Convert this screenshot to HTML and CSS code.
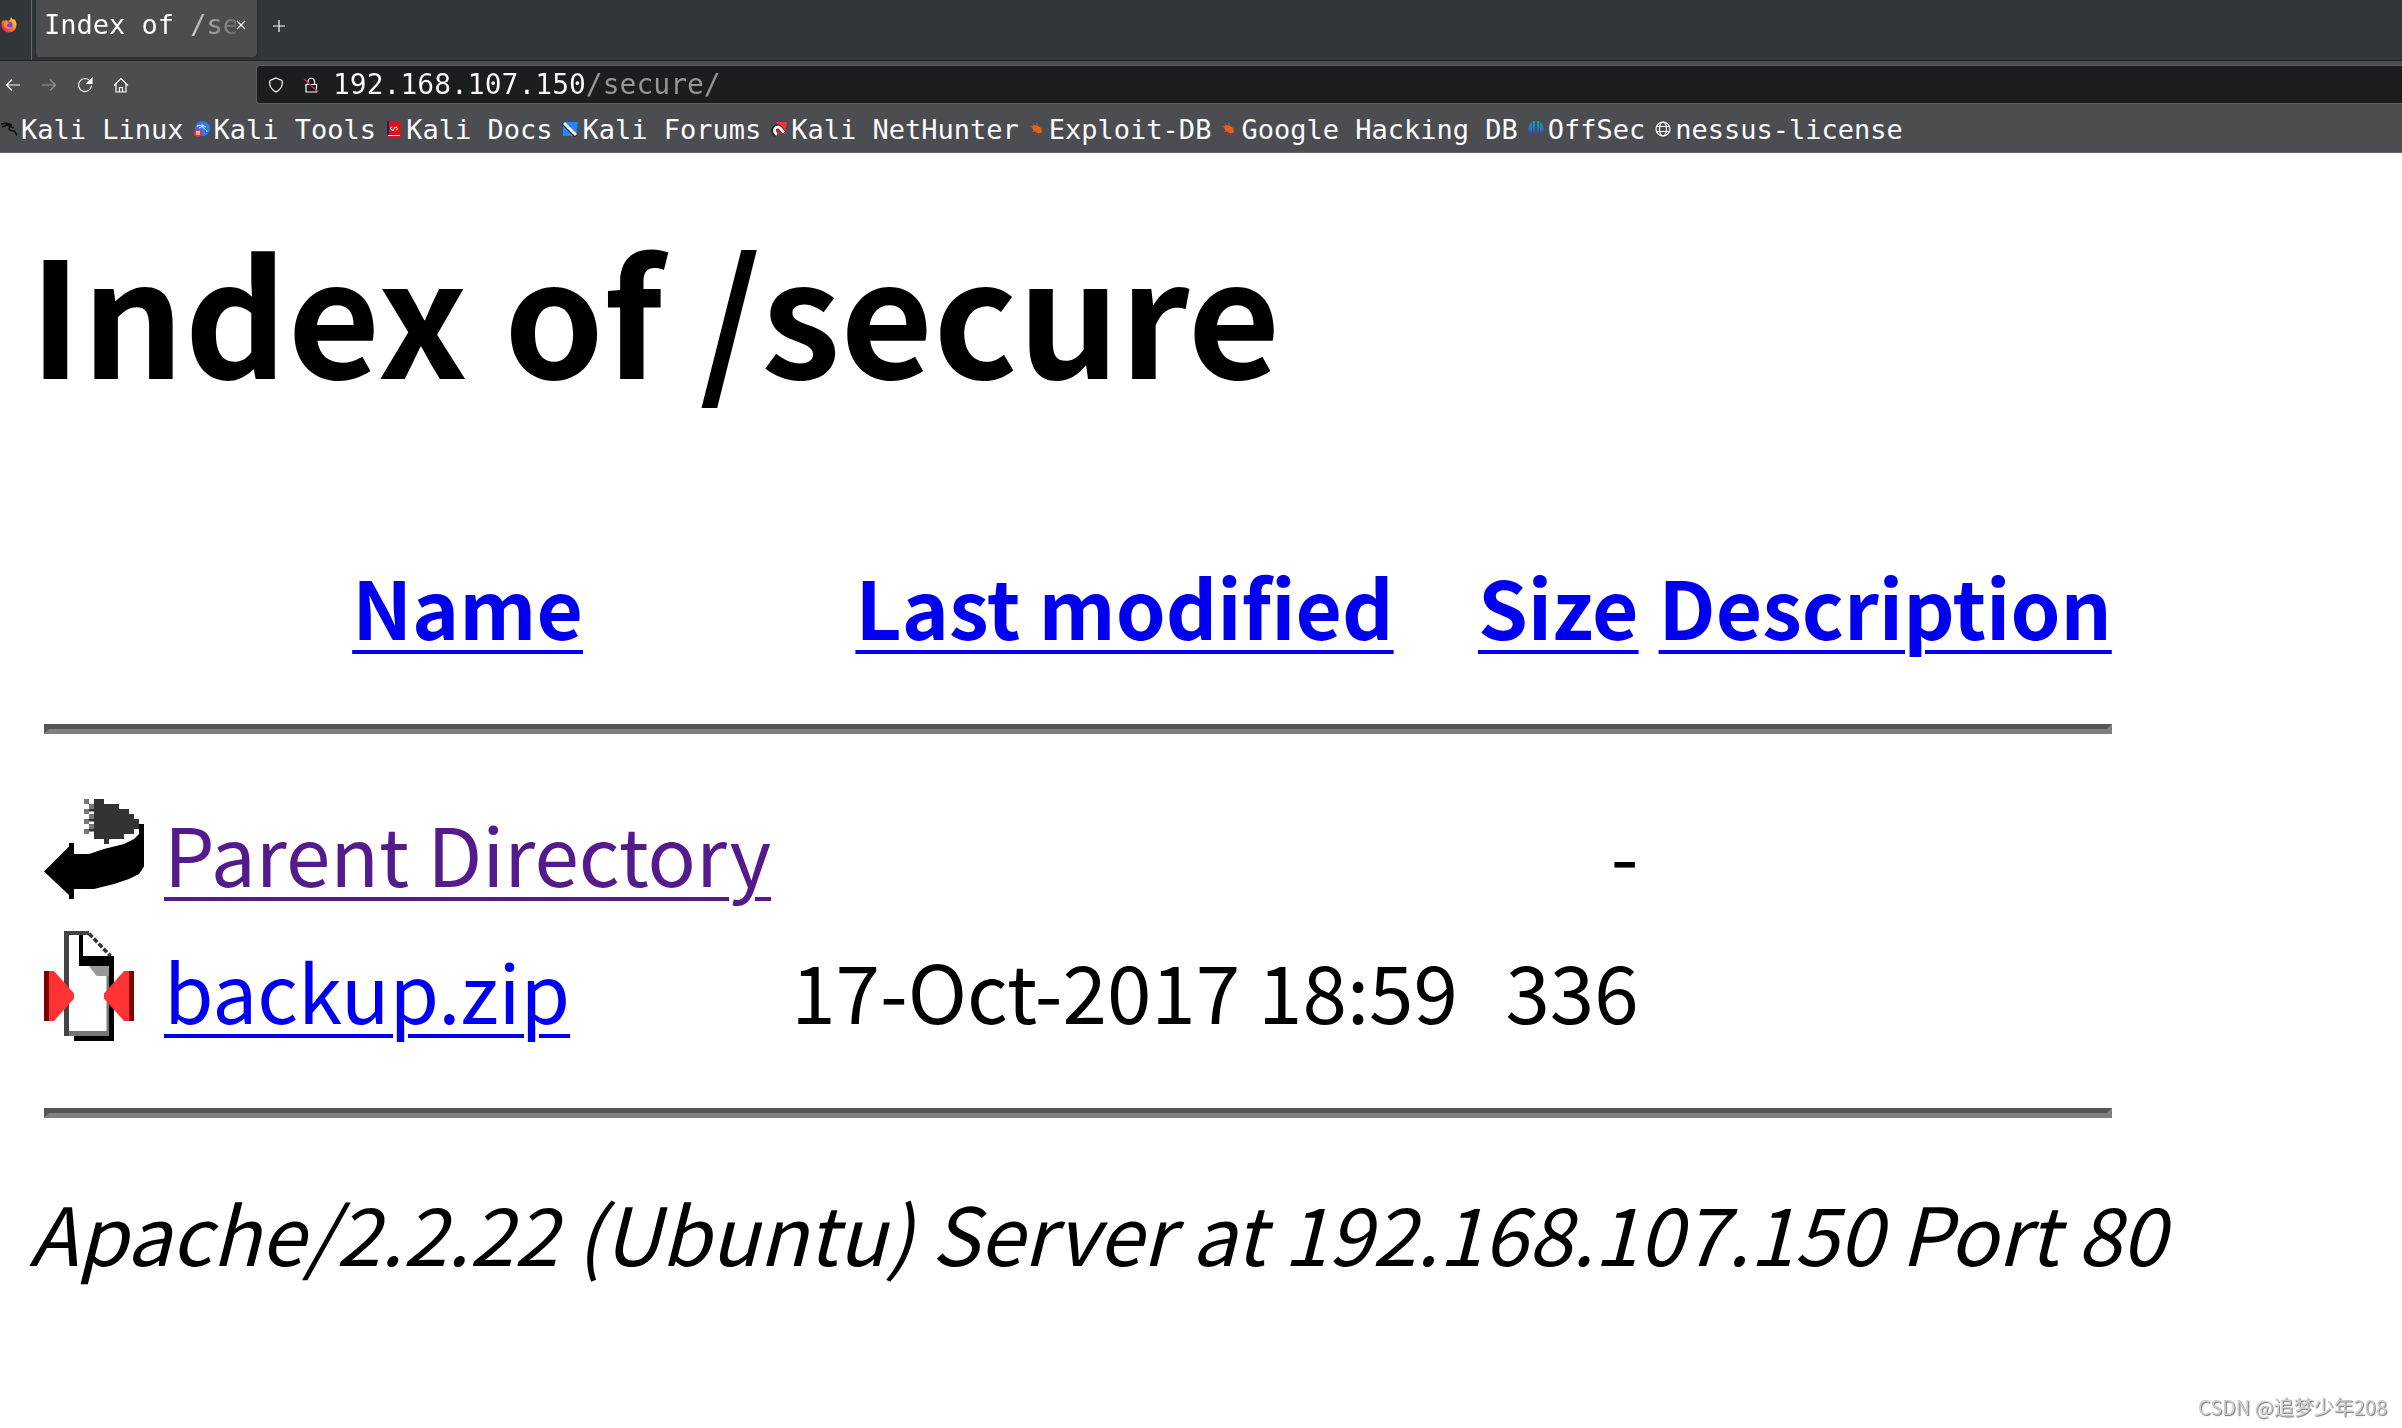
FILE: index.html
```
<!DOCTYPE html>
<html lang="en">
<head>
    <meta charset="UTF-8">
    <meta name="viewport" content="width=device-width, initial-scale=1.0">
    <title>Index of /secure</title>
    <link rel="stylesheet" href="styles.css">
</head>
<body>
    <header class="browser">
        <div class="tabs">
            <div class="pinned">
                <svg class="icon" viewBox="0 0 16 16">
                    <defs>
                        <linearGradient id="fire" x1="1" y1="0" x2="0" y2="1">
                            <stop offset="0" stop-color="#fff44f"/>
                            <stop offset=".4" stop-color="#ff980e"/>
                            <stop offset=".75" stop-color="#ff3647"/>
                            <stop offset="1" stop-color="#e31587"/>
                        </linearGradient>
                    </defs>
                    <path fill="url(#fire)" d="M1 5l1-2 1 1 2-1 2 1 2-1 1-3 2 3 1-1c2 2 2.500 4 2.500 6a7.500 7.500 0 0 1-15 0c0-1 0-3 .5-4z"/>
                    <circle cx="8" cy="8" r="3.500" fill="#7542e5"/>
                    <path fill="#ff980e" d="M3 5l4 0 1 1.500-2 1 0 2 3 1 2-1c-1 3-7 3-8-1z"/>
                </svg>
            </div>
            <div class="tab">
                <span class="tab-title">Index of /secure</span>
                <button class="close" aria-label="Close tab">
                    <svg viewBox="0 0 10 10"><path d="M1 1l8 8M9 1l-8 8"/></svg>
                </button>
            </div>
            <button class="new-tab" aria-label="New tab">
                <svg viewBox="0 0 12 12"><path d="M6 0v12M0 6h12"/></svg>
            </button>
        </div>
        <div class="toolbar">
            <div class="nav">
                <button aria-label="Back"><svg class="icon line" viewBox="0 0 16 16"><path d="M15 8H1.500M7 2.500L1.500 8 7 13.500"/></svg></button>
                <button aria-label="Forward" class="off"><svg class="icon line" viewBox="0 0 16 16"><path d="M1 8h13.500M9 2.500L14.500 8 9 13.500"/></svg></button>
                <button aria-label="Reload"><svg class="icon line" viewBox="0 0 16 16"><path d="M13.500 4.500A6.500 6.500 0 1 0 14.500 8.500"/><path fill="#fbfbfe" d="M15 1.500v5h-5z"/></svg></button>
                <button aria-label="Home"><svg class="icon line" viewBox="0 0 16 16"><path d="M1 8.500L8 1.500l7 7M3 7v8h10V7M6.500 15v-4.500h3V15"/></svg></button>
            </div>
            <div class="address-bar">
                <svg class="icon line" viewBox="0 0 16 16"><path d="M8 1l6 2.500c1 5-1 9-6 11.500C3 12.500 1 8.500 2 3.500z"/></svg>
                <svg class="icon line" viewBox="0 0 16 16"><path d="M3 7.500h10.500V15H3zM5 7.500V4a3.300 3.300 0 0 1 6.500 0v3.500"/><path class="slash" d="M1 2l14 13"/></svg>
                <input type="text" class="url" aria-label="Address" value="192.168.107.150/secure/">
            </div>
        </div>
        <nav class="bookmarks">
            <a href="#"><svg class="icon" viewBox="0 0 16 16"><path fill="none" stroke="#111" stroke-width="1.500" d="M0 3l5-1 6 2-5 0-5 2M5 3l4 3c-3 3 1 4 4 4 2 1 2 3 3 5M8 5l5 2"/></svg>Kali Linux</a>
            <a href="#"><svg class="icon" viewBox="0 0 16 16"><circle cx="8.500" cy="7.500" r="7.500" fill="#2a7cf7"/><path fill="none" stroke="#fff" d="M3 5l5-1 4 2M5 7l4-2c-1 3 3 2 4 6"/><circle cx="4" cy="12" r="4" fill="#e8353b"/><path stroke="#fff" d="M2 10.500h4M3 10.500v3.500M5 10.500v3.500"/></svg>Kali Tools</a>
            <a href="#"><svg class="icon" viewBox="0 0 16 16"><path fill="#d8131b" d="M2 0h13v16H2z"/><path fill="#122a5e" d="M1 0h2v14H1z"/><path fill="#ddd" d="M2 14h12v1H2z"/><path fill="none" stroke="#fff" d="M6 5.500l-1.500 1.500 1 2 2 .5 1-3 2-.5 1 2-1.500 1.500"/></svg>Kali Docs</a>
            <a href="#"><svg class="icon" viewBox="0 0 16 16"><path fill="#2684ff" d="M1 1h15l-2 14H1z"/><path stroke="#222" stroke-width="4" d="M1 2l13 13"/><path stroke="#fff" stroke-width="3" d="M2 2l12 12"/></svg>Kali Forums</a>
            <a href="#"><svg class="icon" viewBox="0 0 16 16"><path fill="#f8323c" d="M5 1h11l-2 13z"/><path fill="none" stroke="#222" stroke-width="5" d="M5 14C-1 9 6 3 9 7l4 5"/><path fill="none" stroke="#fff" stroke-width="3" d="M6 13.500C0 9 6 4 9 7l4 4.500"/><path fill="none" stroke="#e51a3d" stroke-width="1.500" d="M8 13c-3-2-1-5 1-2l2 2"/></svg>Kali NetHunter</a>
            <a href="#"><svg class="icon" viewBox="0 0 16 16"><path stroke="#a95a34" d="M1 5l4 2M8 2v4M13 7l-3 1M3 11l5-2M10 14l-1-4M4 3l3 4"/><path fill="#ee6011" d="M3 5l3-1 5 2 2 4-1 2-4 0-4-3z"/></svg>Exploit-DB</a>
            <a href="#"><svg class="icon" viewBox="0 0 16 16"><path stroke="#a95a34" d="M1 5l4 2M8 2v4M13 7l-3 1M3 11l5-2M10 14l-1-4M4 3l3 4"/><path fill="#ee6011" d="M3 5l3-1 5 2 2 4-1 2-4 0-4-3z"/></svg>Google Hacking DB</a>
            <a href="#"><svg class="icon" viewBox="0 0 16 16">
                <defs>
                    <linearGradient id="sea" gradientUnits="userSpaceOnUse" x1="0" y1="0" x2="0" y2="16">
                        <stop offset="0" stop-color="#08b0c0"/>
                        <stop offset=".5" stop-color="#2a74cc"/>
                        <stop offset="1" stop-color="#4a1fa0"/>
                    </linearGradient>
                </defs>
                <path fill="url(#sea)" d="M4 1v12C-1 11 0 4 4 1zM5 0h2v15l-2-1zM9 0h2v14l-2 1zM12 1c4 3 5 10 0 12z"/></svg>OffSec</a>
            <a href="#"><svg class="icon line" viewBox="0 0 16 16"><circle cx="8" cy="8" r="7"/><ellipse cx="8" cy="8" rx="3.500" ry="7"/><path d="M1.500 5.500h13M1.500 10.500h13"/></svg>nessus-license</a>
        </nav>
    </header>

    <main class="listing">
        <h1>Index of /secure</h1>
        <table>
            <tr><th></th><th><a href="#">Name</a></th><th><a href="#">Last modified</a></th><th><a href="#">Size</a></th><th><a href="#">Description</a></th></tr>
            <tr><td colspan="5"><hr></td></tr>
            <tr>
                <td>
                    <!-- back arrow -->
                    <svg class="back" viewBox="0 0 20 22">
                        <path fill="#333" d="M10 1h2v1h3v1h2v1h1v1h1v1h1v1h-2v1h-2v1h-3v1h-1V9h-2V7.500H9v-1h1v-1H9v-1h1v-1H9v-1h1z"/>
                        <path fill="#777" d="M8 1h1v1H8zM8 3h1v1H8zM8 5h1v1H8zM8 7h1v1H8zM9 2h1v1H9zM9 4h1v1H9zM9 6h1v1H9z"/>
                        <path d="M0 15.500L5 10.500V9.800h1V12h3l3-1 4-1 2-1 1-1V6h1v8.500l-1 1.500-2 1-3 1-4 1H6v2H5v-.8z"/>
                    </svg>
                </td>
                <td><a href="#" class="visited">Parent Directory</a></td>
                <td></td>
                <td class="right">-</td>
                <td></td>
            </tr>
            <tr>
                <td>
                    <!-- compressed file -->
                    <svg class="zip" viewBox="0 0 18 22">
                        <path fill="#444" d="M4 0h5v.8H5V20h1v1H4z"/>
                        <path fill="#777" d="M5 20h8v1H5zM12.500 7h.5v13h-.5z"/>
                        <path d="M7 .8h.8V5H14v17H6v-1h7V7H7z"/>
                        <path fill="none" stroke="#333" stroke-width=".7" stroke-dasharray="1 .4" d="M9 .5L13.300 5"/>
                        <path fill="#999" d="M9 7h4v2h-2.500z"/>
                        <path fill="#f33" d="M1 8h1l4 4.500v1L2 18H1zM17 8h-1l-4 4.500v1l4 4.500h1z"/>
                        <path fill="#800000" d="M0 8h1v10H0zM17 8h1v10h-1z"/>
                    </svg>
                </td>
                <td><a href="#">backup.zip</a></td>
                <td class="right">17-Oct-2017 18:59</td>
                <td class="right">336</td>
                <td></td>
            </tr>
            <tr><td colspan="5"><hr></td></tr>
        </table>
        <address>Apache/2.2.22 (Ubuntu) Server at 192.168.107.150 Port 80</address>
    </main>
    <div class="watermark">CSDN @追梦少年208</div>
</body>
</html>
```
FILE: styles.css
```
body {
    margin: 0;
    background: #fff;
    color: #000;
    font-family: "Noto Sans CJK SC", sans-serif;
}

/* browser window */
.browser {
    background: #4b4d51;
    border-bottom: 1px solid #66696c;
    color: #fbfbfe;
    font-family: "DejaVu Sans Mono", monospace;
    font-size: 27px;
    overflow: hidden;
}
.browser button {
    background: none;
    border: 0;
    padding: 0;
    display: flex;
}
.icon {
    display: block;
    width: 16px;
    height: 16px;
    flex: none;
}
.line, .close svg, .new-tab svg {
    fill: none;
    stroke: #fbfbfe;
    stroke-width: 1.2;
}
.tabs {
    display: flex;
    height: 60px;
    background: #31363b;
    border-bottom: 1px solid #202428;
}
.pinned {
    width: 32px;
    padding: 17px 0 0 1px;
    border-right: 1px solid #66696c;
    box-sizing: border-box;
}
.tab {
    display: flex;
    align-items: center;
    width: 221px;
    height: 57px;
    margin-left: 4px;
    padding: 0 11px 8px 8px;
    box-sizing: border-box;
    background: #4b4d51;
    border-radius: 0 0 4px 4px;
    box-shadow: 0 0 3px #202428;
}
.tab-title {
    flex: 1;
    overflow: hidden;
    white-space: nowrap;
    mask-image: linear-gradient(to right, #000 65%, transparent 108%);
}
.close svg {
    width: 10px;
    height: 10px;
}
.new-tab {
    margin: 20px 0 0 16px;
}
.new-tab svg {
    width: 12px;
    height: 12px;
}
.toolbar {
    display: flex;
    align-items: center;
    padding-top: 4px;
}
.nav {
    display: flex;
    gap: 20px;
    width: 251px;
    padding-left: 5px;
}
.off {
    opacity: .4;
}
.address-bar {
    display: flex;
    flex: 1;
    align-items: center;
    gap: 19px;
    height: 37px;
    padding-left: 11px;
    background: #1b1e20;
    border: 1px solid #5e6164;
    border-right: 0;
    border-radius: 4px 0 0 4px;
}
.slash {
    stroke: #e22850;
}
/* host is bright, the rest of the address is dimmed */
.url {
    flex: 1;
    margin-left: -5px;
    padding: 0;
    border: 0;
    outline: 0;
    font: 28px "DejaVu Sans Mono", monospace;
    color: transparent;
    background: linear-gradient(to right, #fbfbfe 15ch, #95969a 15ch);
    background-clip: text;
}
.bookmarks {
    display: flex;
    gap: 10px;
    height: 46px;
    padding: 2px 0 0 1px;
}
.bookmarks a {
    display: flex;
    align-items: center;
    gap: 4px;
    color: #fbfbfe;
    text-decoration: none;
    white-space: nowrap;
}

/* directory listing */
.listing {
    padding: 40px 29px;
    font-size: 80px;
    line-height: 117px;
}
h1 {
    margin: 0 0 107px;
    font-size: 160px;
    line-height: 232px;
}
table {
    border-spacing: 10px;
    font-size: 80px;
}
th, td {
    padding: 5px;
    vertical-align: top;
    white-space: nowrap;
}
hr {
    margin: 40px 0;
    border: 5px solid #555;
    border-right-color: #808080;
    border-bottom-color: #808080;
}
.listing a {
    color: #00e;
    text-decoration-thickness: 4px;
    text-underline-offset: 10px;
}
.listing .visited {
    color: #551a8b;
}
.right {
    text-align: right;
}
.back, .zip {
    display: block;
    height: 110px;
}
.back {
    width: 100px;
}
.zip {
    width: 90px;
}
.watermark {
    position: fixed;
    right: 15px;
    bottom: 7px;
    color: #ccc;
    font-size: 20px;
    line-height: 28px;
    text-shadow: 1px 1px 1px #777;
}
```
